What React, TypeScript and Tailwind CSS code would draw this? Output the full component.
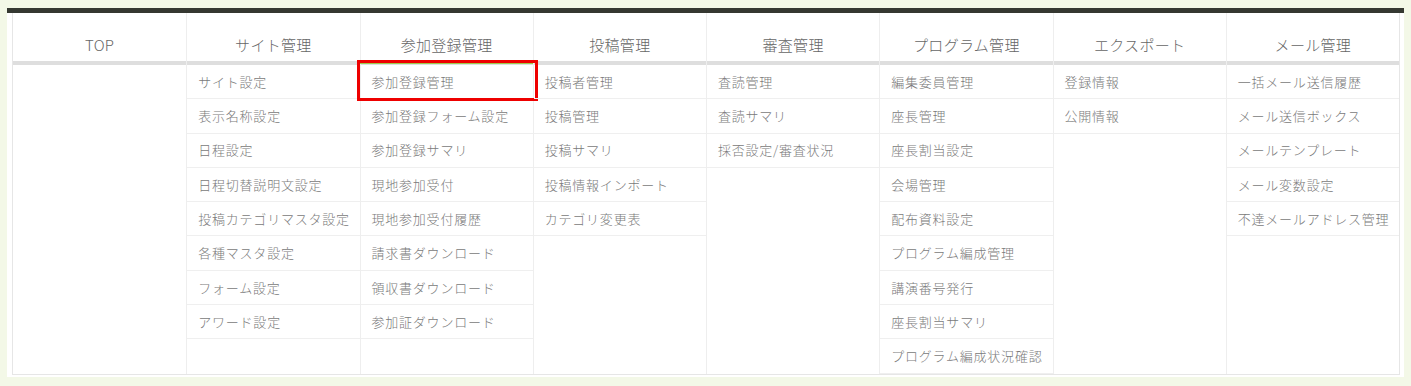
import React from 'react';

type Menu = { title: string; items: string[] };

const menus: Menu[] = [
    { title: 'TOP', items: [] },
    {
        title: 'サイト管理',
        items: ['サイト設定', '表示名称設定', '日程設定', '日程切替説明文設定', '投稿カテゴリマスタ設定', '各種マスタ設定', 'フォーム設定', 'アワード設定'],
    },
    {
        title: '参加登録管理',
        items: ['参加登録管理', '参加登録フォーム設定', '参加登録サマリ', '現地参加受付', '現地参加受付履歴', '請求書ダウンロード', '領収書ダウンロード', '参加証ダウンロード'],
    },
    { title: '投稿管理', items: ['投稿者管理', '投稿管理', '投稿サマリ', '投稿情報インポート', 'カテゴリ変更表'] },
    { title: '審査管理', items: ['査読管理', '査読サマリ', '採否設定/審査状況'] },
    {
        title: 'プログラム管理',
        items: ['編集委員管理', '座長管理', '座長割当設定', '会場管理', '配布資料設定', 'プログラム編成管理', '講演番号発行', '座長割当サマリ', 'プログラム編成状況確認'],
    },
    { title: 'エクスポート', items: ['登録情報', '公開情報'] },
    { title: 'メール管理', items: ['一括メール送信履歴', 'メール送信ボックス', 'メールテンプレート', 'メール変数設定', '不達メールアドレス管理'] },
];

export default function App() {
    return (
        <div
            className="w-[1411px] h-[386px] bg-[#f3f8e7] pt-[8px] pl-[7px] overflow-hidden"
            style={{ fontFamily: '"Noto Sans CJK JP", "Noto Sans", sans-serif' }}
        >
            <div className="w-[1397px] bg-white border-t-[5px] border-[#353831] pl-[5px] pr-[4px] pb-[2px]">
                <div className="border-l border-r border-b border-[#e6e6e6] grid grid-cols-8">
                    {menus.map((menu, i) => (
                        <div key={menu.title} className={i === 0 ? 'flex flex-col' : 'flex flex-col border-l border-[#eeeeee]'}>
                            {/* header cell */}
                            <div className="h-[52px] border-b-[4px] border-[#dedede] flex items-center justify-center pt-[16px] text-[15px] font-light text-[#666666] tracking-[0.02em]">
                                {menu.title}
                            </div>
                            <div className="flex flex-col min-h-[309px]">
                                {menu.items.map((item) => {
                                    const active = item === '参加登録管理';
                                    return (
                                        <div
                                            key={item}
                                            className="relative h-[34.3px] border-b border-[#efefef] flex items-center pl-[11px] text-[13px] font-light text-[#7a7a7a] tracking-[0.06em] whitespace-nowrap"
                                        >
                                            {item}
                                            {active && (
                                                <>
                                                    <span className="absolute left-[-2px] right-0 top-[-3px] h-[2px] bg-[#9ccc4a]" />
                                                    <span className="absolute left-[-4px] right-[-5px] top-[-5px] bottom-[-3px] border-[3px] border-[#ee0000]" />
                                                </>
                                            )}
                                        </div>
                                    );
                                })}
                            </div>
                        </div>
                    ))}
                </div>
            </div>
        </div>
    );
}
